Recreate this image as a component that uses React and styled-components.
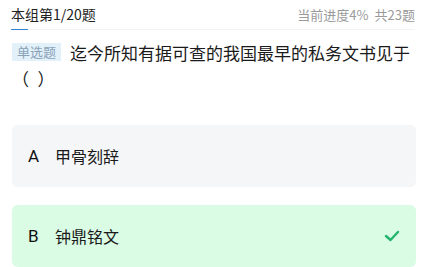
import React from "react";
import styled, { createGlobalStyle } from "styled-components";

const Global = createGlobalStyle`
  html, body { margin: 0; padding: 0; background: #ffffff; }
  body { font-family: "Noto Sans CJK SC", "Noto Sans", sans-serif; overflow: hidden; }
`;

const Page = styled.div`
  width: 426px;
  height: 267px;
  overflow: hidden;
  background: #fff;
  display: flex;
  flex-direction: column;
`;

const Header = styled.div`
  display: flex;
  justify-content: space-between;
  align-items: center;
  padding: 4px 11px 0 11px;
  height: 22px;
`;

const GroupTitle = styled.div`
  font-size: 14px;
  color: #222;
`;

const Progress = styled.div`
  font-size: 13px;
  color: #9a9a9a;
  display: flex;
  gap: 6px;
`;

const Track = styled.div`
  margin: 5px 11px 0 11px;
  height: 3px;
  border-radius: 2px;
  background: #f3f3f3;
`;

const Fill = styled.div`
  height: 100%;
  border-radius: 2px;
  background: #2f7fd3;
`;

const Question = styled.div`
  margin: 10px 12px 0 12px;
  font-size: 17px;
  line-height: 26px;
  color: #1a1a1a;
`;

const Tag = styled.span`
  float: left;
  margin-top: 3px;
  background: #e2f0fa;
  color: #8aa2b8;
  font-size: 13px;
  line-height: 18px;
  padding: 0 5px;
  margin-right: 9px;
`;

const Options = styled.div`
  margin: 33px 10px 0 12px;
  display: flex;
  flex-direction: column;
  gap: 18px;
`;

const Card = styled.div`
  height: 62px;
  flex-shrink: 0;
  border-radius: 6px;
  background: ${(p) => (p.$correct ? "#dafbe4" : "#f5f6f8")};
  box-shadow: 0 0 1px rgba(0, 0, 0, 0.04);
  display: flex;
  align-items: center;
  padding: 0 16px;
`;

const Letter = styled.span`
  font-family: "Roboto", "Noto Sans", sans-serif;
  font-size: 17px;
  color: #111;
  width: 27px;
`;

const Label = styled.span`
  font-size: 16px;
  color: #1a1a1a;
  flex: 1;
`;

const Check = () => (
  <svg width="16" height="12" viewBox="0 0 16 12">
    <path d="M2 6 L6.5 10 L14 2" fill="none" stroke="#22b56d" strokeWidth="2.4" strokeLinecap="round" strokeLinejoin="round" />
  </svg>
);

export default function App() {
  return (
    <Page>
      <Global />
      <Header>
        <GroupTitle>本组第1/20题</GroupTitle>
        <Progress>
          <span>当前进度4%</span>
          <span>共23题</span>
        </Progress>
      </Header>
      <Track>
        <Fill style={{ width: "4.2%" }} />
      </Track>
      <Question>
        <Tag>单选题</Tag>
        迄今所知有据可查的我国最早的私务文书见于（{"\u2002"}）
      </Question>
      <Options>
        <Card>
          <Letter>A</Letter>
          <Label>甲骨刻辞</Label>
        </Card>
        <Card $correct>
          <Letter>B</Letter>
          <Label>钟鼎铭文</Label>
          <Check />
        </Card>
      </Options>
    </Page>
  );
}
